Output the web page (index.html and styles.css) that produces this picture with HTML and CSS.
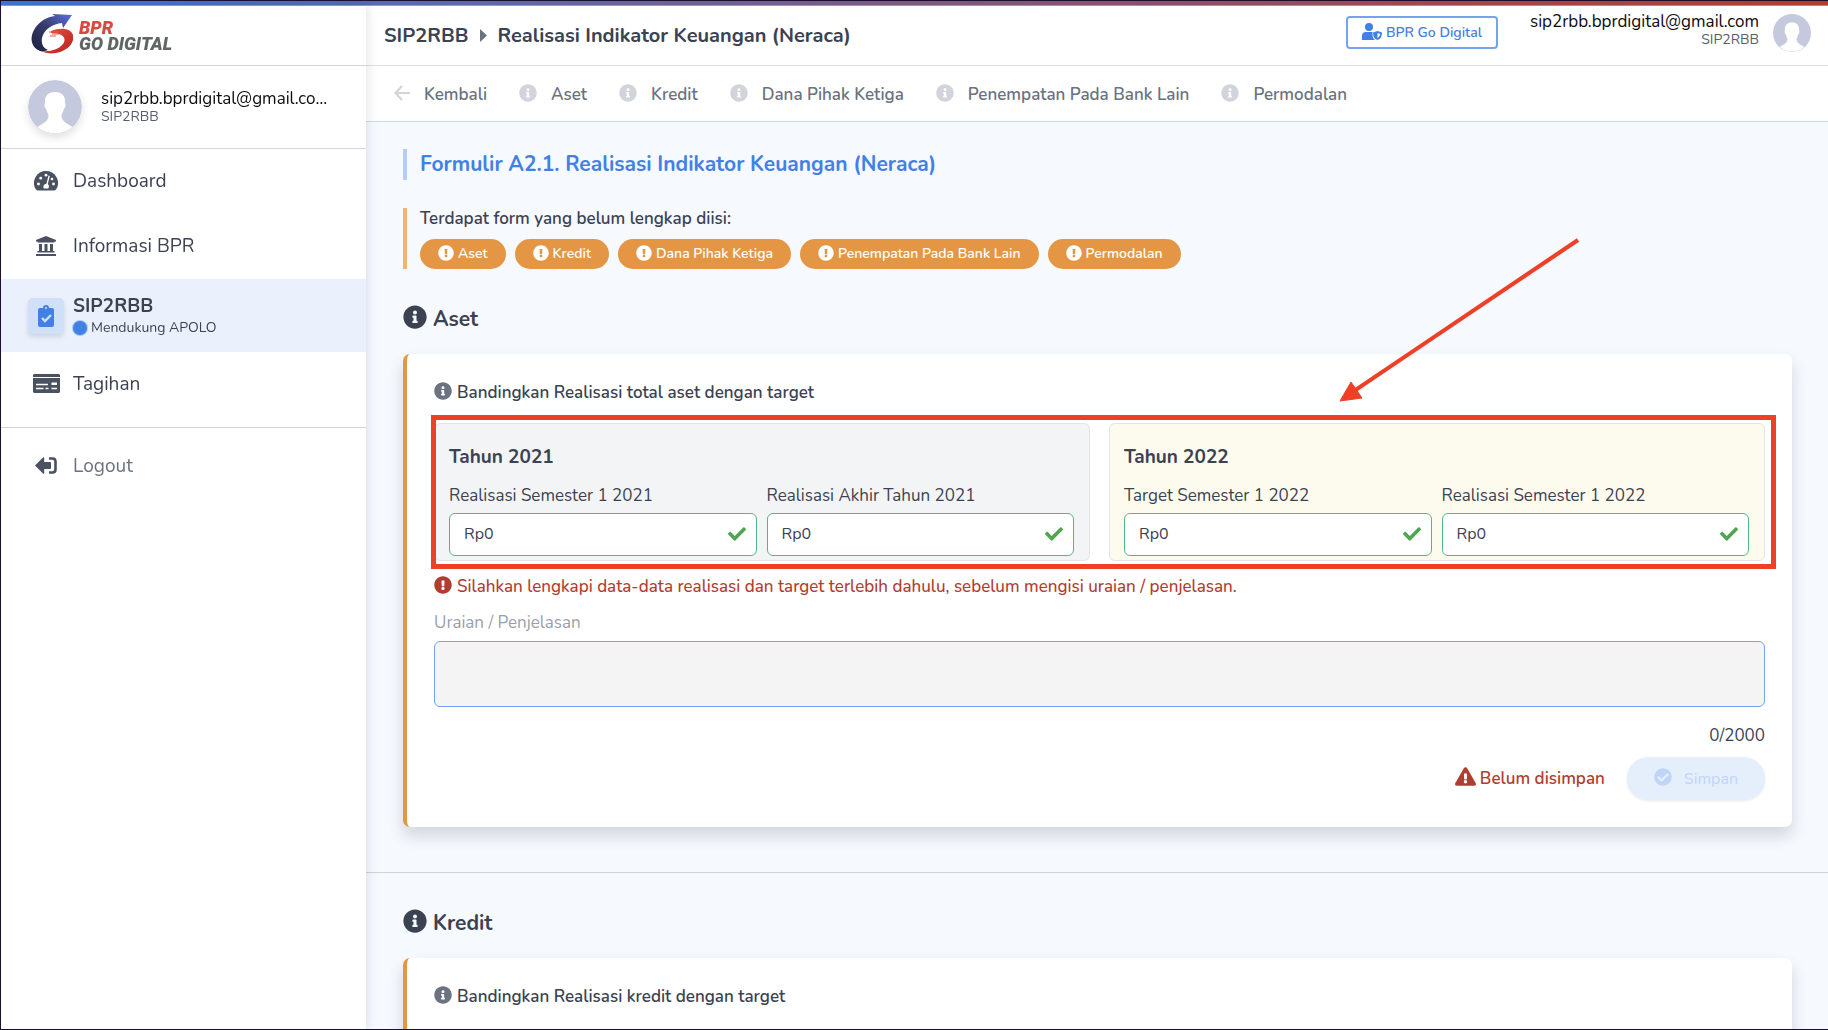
FILE: index.html
```html
<!DOCTYPE html>
<html lang="id">
<head>
<meta charset="utf-8">
<meta name="viewport" content="width=device-width, initial-scale=1">
<title>SIP2RBB - Realisasi Indikator Keuangan (Neraca)</title>
<link rel="stylesheet" href="styles.css">
</head>
<body>
<svg width="0" height="0" class="sprite" aria-hidden="true">
  <symbol id="info" viewBox="0 0 512 512"><path d="M256 8C119.043 8 8 119.083 8 256c0 136.997 111.043 248 248 248s248-111.003 248-248C504 119.083 392.957 8 256 8zm0 110c23.196 0 42 18.804 42 42s-18.804 42-42 42-42-18.804-42-42 18.804-42 42-42zm56 254c0 6.627-5.373 12-12 12h-88c-6.627 0-12-5.373-12-12v-24c0-6.627 5.373-12 12-12h12v-64h-12c-6.627 0-12-5.373-12-12v-24c0-6.627 5.373-12 12-12h64c6.627 0 12 5.373 12 12v100h12c6.627 0 12 5.373 12 12v24z"/></symbol>
  <symbol id="alert" viewBox="0 0 512 512"><path d="M504 256c0 136.997-111.043 248-248 248S8 392.997 8 256C8 119.083 119.043 8 256 8s248 111.083 248 248zm-248 50c-25.405 0-46 20.595-46 46s20.595 46 46 46 46-20.595 46-46-20.595-46-46-46zm-43.673-165.346l7.418 136c.347 6.364 5.609 11.346 11.982 11.346h48.546c6.373 0 11.635-4.982 11.982-11.346l7.418-136c.375-6.874-5.098-12.654-11.982-12.654h-63.383c-6.884 0-12.356 5.78-11.981 12.654z"/></symbol>
  <symbol id="done" viewBox="0 0 512 512"><path d="M504 256c0 136.967-111.033 248-248 248S8 392.967 8 256 119.033 8 256 8s248 111.033 248 248zM227.314 387.314l184-184c6.248-6.248 6.248-16.379 0-22.627l-22.627-22.627c-6.248-6.249-16.379-6.249-22.628 0L216 308.118l-70.059-70.059c-6.248-6.248-16.379-6.248-22.628 0l-22.627 22.627c-6.248 6.248-6.248 16.379 0 22.627l104 104c6.249 6.249 16.379 6.249 22.628.001z"/></symbol>
  <symbol id="warn" viewBox="0 0 576 512"><path d="M569.517 440.013C587.975 472.007 564.806 512 527.94 512H48.054c-36.937 0-59.999-40.055-41.577-71.987L246.423 23.985c18.467-32.009 64.72-31.951 83.154 0l239.94 416.028zM288 354c-25.405 0-46 20.595-46 46s20.595 46 46 46 46-20.595 46-46-20.595-46-46-46zm-43.673-165.346l7.418 136c.347 6.364 5.609 11.346 11.982 11.346h48.546c6.373 0 11.635-4.982 11.982-11.346l7.418-136c.375-6.874-5.098-12.654-11.982-12.654h-63.383c-6.884 0-12.356 5.78-11.981 12.654z"/></symbol>
  <symbol id="check" viewBox="0 0 512 512"><path d="M173.898 439.404l-166.4-166.4c-9.997-9.997-9.997-26.206 0-36.204l36.203-36.204c9.997-9.998 26.207-9.998 36.204 0L192 312.69 432.095 72.596c9.997-9.997 26.207-9.997 36.204 0l36.203 36.204c9.997 9.997 9.997 26.206 0 36.204l-294.4 294.401c-9.998 9.997-26.207 9.997-36.204-.001z"/></symbol>
  <symbol id="avatar" viewBox="0 0 54 54"><circle cx="27" cy="27" r="27" fill="#c5c9de"/><path d="M27 12c-7 0-10.500 4-10 11-1 1-.5 5 1.200 6 .6 3 1.800 4.500 2.300 6 .3 6-4.500 8-11 12a27 27 0 0 0 35 0c-6.500-4-11.300-6-11-12 .5-1.500 1.700-3 2.300-6 1.700-1 2.200-5 1.200-6 .5-7-3-11-10-11z" fill="#fff"/></symbol>
</svg>

<div class="topline"></div>
<div class="shell">
  <aside class="sidebar">
    <a class="brand" href="#" aria-label="BPR Go Digital">
      <svg class="brand-mark" viewBox="0 0 42 40" aria-hidden="true">
        <defs>
          <linearGradient id="navy" x1="0" y1="1" x2="1" y2="0"><stop offset="0" stop-color="#1c1f3d"/><stop offset=".5" stop-color="#363c6b"/><stop offset="1" stop-color="#5b6fe0"/></linearGradient>
          <linearGradient id="crimson" x1="0" y1="0" x2="1" y2="1"><stop offset="0" stop-color="#e8564a"/><stop offset="1" stop-color="#b5201b"/></linearGradient>
        </defs>
        <path d="M9 37C1 34-2 25 3 16 8 7 16 3 24 2l-3-2 20 1-9 13-1-5C22 10 13 15 11 24c-1 6 1 10 6 12-3 1-5 2-8 1z" fill="url(#navy)"/>
        <path d="M20 17c9-4 20-3 22 4 2 8-6 16-17 18-6 1-11 0-15-2 10 1 18-2 22-7 4-6 0-11-12-11z" fill="url(#crimson)"/>
        <path d="M18 18h9M21 20h7M19 22h6" stroke="#e8564a" stroke-width="1"/>
      </svg>
      <span class="brand-name"><span class="brand-top">BPR</span><span class="brand-bottom">GO DIGITAL</span></span>
    </a>
    <div class="profile">
      <svg class="profile-pic" aria-hidden="true"><use href="#avatar"/></svg>
      <div class="profile-text">
        <div class="mail">sip2rbb.bprdigital@gmail.com</div>
        <div class="role">SIP2RBB</div>
      </div>
    </div>
    <nav class="menu" aria-label="Menu utama">
      <a class="item" href="#">
        <span class="item-icon"><svg width="24" height="20" viewBox="0 0 24 20" aria-hidden="true"><path d="M12 0A12 12 0 0 0 1.600 18q.8 1.400 2 1.400h16.800q1.200 0 2-1.400A12 12 0 0 0 12 0z"/><g fill="#fff"><circle cx="4.500" cy="13" r="1.400"/><circle cx="6.700" cy="7.200" r="1.400"/><circle cx="12" cy="4.200" r="1.400"/><circle cx="18" cy="8" r="1.300"/><circle cx="19.500" cy="13" r="1.400"/><path d="M14.500 4.500l1.300.4-2 8.200a3 3 0 0 1 .3 4.500h-4.200a3 3 0 0 1 2.500-4.800z"/></g></svg></span>
        <span>Dashboard</span>
      </a>
      <a class="item" href="#">
        <span class="item-icon"><svg width="20" height="20" viewBox="0 0 20 20" aria-hidden="true"><path d="M10 0l10 4v1.500h-1.500v1h-17v-1H0V4zM3 8h3v7h2.500V8h3v7H14V8h3v7h1.500v1.500h-17V15H3zM0 18h20v2H0z"/></svg></span>
        <span>Informasi BPR</span>
      </a>
      <a class="item item-active" href="#" aria-current="page">
        <span class="item-icon tile"><svg width="16" height="22" viewBox="0 0 16 22" aria-hidden="true"><path d="M2 3h3a3 3 0 0 1 6 0h3a2 2 0 0 1 2 2v15a2 2 0 0 1-2 2H2a2 2 0 0 1-2-2V5a2 2 0 0 1 2-2z"/><circle cx="8" cy="3" r="1" fill="#cfe0f8"/><path d="M4 13l3 3 6-6" fill="none" stroke="#cfe0f8" stroke-width="2.400"/></svg></span>
        <span class="item-stack"><span>SIP2RBB</span><small><i class="dot"></i>Mendukung APOLO</small></span>
      </a>
      <a class="item" href="#">
        <span class="item-icon"><svg width="27" height="19" viewBox="0 0 27 19" aria-hidden="true"><path d="M1 0h25l1 1v2H0V1zM0 4h27v14l-1 1H1l-1-1z"/><path d="M3 10.500h12M3 14.500h7.500M12.500 14.500h3M18.500 14.500H24" stroke="#fff" stroke-width="1.300"/><path d="M18.500 8.500H24V11h-5.500z" fill="#fff"/></svg></span>
        <span>Tagihan</span>
      </a>
    </nav>
    <div class="menu menu-end">
      <a class="item item-muted" href="#">
        <span class="item-icon"><svg width="22" height="17" viewBox="0 0 22 17" aria-hidden="true"><path d="M0 8.500L8 .5q1-.8 1.200.6V5H15q1 0 1 1v5q0 1-1 1H9.200v3.900q-.2 1.400-1.200.6z"/><path d="M14 1.500h3.500q3 0 3 3v8q0 3-3 3H14" fill="none" stroke="#4a5160" stroke-width="2.600"/></svg></span>
        <span>Logout</span>
      </a>
    </div>
  </aside>

  <div class="content">
    <header class="header">
      <h1 class="crumbs"><span>SIP2RBB</span><svg width="7" height="13" viewBox="0 0 7 13" aria-hidden="true"><path d="M0 0l7 6.500L0 13z"/></svg><span>Realisasi Indikator Keuangan (Neraca)</span></h1>
      <div class="account">
        <button class="org" type="button"><svg width="20" height="17" viewBox="0 0 20 17" aria-hidden="true"><circle cx="7" cy="4" r="4"/><path d="M0 17v-4q0-4 4-4h6.500v3q0 3.500 2.500 5zM15.500 8l4.500 1.500c0 4-1.500 6.500-4.500 7.500-3-1-4.500-3.500-4.500-7.500z"/><path d="M15.500 10v5c1.500-.8 2.500-2.200 2.700-4z" fill="#fff"/></svg>BPR Go Digital</button>
        <div class="account-text"><div class="mail">sip2rbb.bprdigital@gmail.com</div><div class="role">SIP2RBB</div></div>
        <svg class="account-pic" aria-hidden="true"><use href="#avatar"/></svg>
      </div>
    </header>
    <nav class="tabs" aria-label="Bagian formulir">
      <a href="#"><svg width="16" height="16" viewBox="0 0 16 16" aria-hidden="true"><path d="M8 1L1.500 8 8 15M1.500 8H16" fill="none" stroke="#d1d5db" stroke-width="2.200"/></svg>Kembali</a>
      <a href="#aset"><svg class="i18" aria-hidden="true"><use href="#info"/></svg>Aset</a>
      <a href="#kredit"><svg class="i18" aria-hidden="true"><use href="#info"/></svg>Kredit</a>
      <a href="#"><svg class="i18" aria-hidden="true"><use href="#info"/></svg>Dana Pihak Ketiga</a>
      <a href="#"><svg class="i18" aria-hidden="true"><use href="#info"/></svg>Penempatan Pada Bank Lain</a>
      <a href="#"><svg class="i18" aria-hidden="true"><use href="#info"/></svg>Permodalan</a>
    </nav>
    <main class="main">
      <div class="intro">
        <h2 class="form-title">Formulir A2.1. Realisasi Indikator Keuangan (Neraca)</h2>
        <div class="notice">
          <p>Terdapat form yang belum lengkap diisi:</p>
          <div class="pills">
            <a href="#aset"><svg class="i16" aria-hidden="true"><use href="#alert"/></svg>Aset</a>
            <a href="#kredit"><svg class="i16" aria-hidden="true"><use href="#alert"/></svg>Kredit</a>
            <a href="#"><svg class="i16" aria-hidden="true"><use href="#alert"/></svg>Dana Pihak Ketiga</a>
            <a href="#"><svg class="i16" aria-hidden="true"><use href="#alert"/></svg>Penempatan Pada Bank Lain</a>
            <a href="#"><svg class="i16" aria-hidden="true"><use href="#alert"/></svg>Permodalan</a>
          </div>
        </div>
      </div>

      <section class="section" id="aset">
        <h3 class="section-title"><svg class="i24" aria-hidden="true"><use href="#info"/></svg>Aset</h3>
        <form class="card">
          <p class="lead"><svg class="i18" aria-hidden="true"><use href="#info"/></svg>Bandingkan Realisasi total aset dengan target</p>
          <div class="years">
            <fieldset class="year">
              <legend>Tahun 2021</legend>
              <div class="fields">
                <label>Realisasi Semester 1 2021<span class="money"><input type="text" value="Rp0"><svg class="i18" aria-hidden="true"><use href="#check"/></svg></span></label>
                <label>Realisasi Akhir Tahun 2021<span class="money"><input type="text" value="Rp0"><svg class="i18" aria-hidden="true"><use href="#check"/></svg></span></label>
              </div>
            </fieldset>
            <fieldset class="year year-target">
              <legend>Tahun 2022</legend>
              <div class="fields">
                <label>Target Semester 1 2022<span class="money"><input type="text" value="Rp0"><svg class="i18" aria-hidden="true"><use href="#check"/></svg></span></label>
                <label>Realisasi Semester 1 2022<span class="money"><input type="text" value="Rp0"><svg class="i18" aria-hidden="true"><use href="#check"/></svg></span></label>
              </div>
            </fieldset>
            <div class="marker"></div>
            <svg class="pointer" viewBox="0 0 240 164" aria-hidden="true"><path d="M238 2L14 153" stroke="#ed4026" stroke-width="4"/><path d="M0 163l11-19 11 16z" fill="#ed4026" stroke="#ed4026"/></svg>
          </div>
          <p class="error"><svg class="i18" aria-hidden="true"><use href="#alert"/></svg>Silahkan lengkapi data-data realisasi dan target terlebih dahulu, sebelum mengisi uraian / penjelasan.</p>
          <label class="note-label" for="uraian-aset">Uraian / Penjelasan</label>
          <textarea class="note" id="uraian-aset" disabled></textarea>
          <div class="count">0/2000</div>
          <div class="actions">
            <span class="unsaved"><svg width="21" height="19" aria-hidden="true"><use href="#warn"/></svg>Belum disimpan</span>
            <button class="save" type="submit" disabled><svg class="i18" aria-hidden="true"><use href="#done"/></svg>Simpan</button>
          </div>
        </form>
      </section>

      <section class="section" id="kredit">
        <h3 class="section-title"><svg class="i24" aria-hidden="true"><use href="#info"/></svg>Kredit</h3>
        <form class="card">
          <p class="lead"><svg class="i18" aria-hidden="true"><use href="#info"/></svg>Bandingkan Realisasi kredit dengan target</p>
        </form>
      </section>
    </main>
  </div>
</div>
</body>
</html>
```
FILE: styles.css
```css
*, *::before, *::after { box-sizing: border-box; }

body {
  margin: 0;
  height: 100vh;
  display: flex;
  flex-direction: column;
  border: 1px solid #1b1030;
  border-right: 0;
  overflow: hidden;
  background: #fff;
  color: #3b4252;
  font: 17px/20px Nunito, "Noto Sans", sans-serif;
}

h1, h2, h3, p { margin: 0; }
a { color: inherit; text-decoration: none; }
svg { flex: none; fill: currentColor; }
button, input, textarea { font: inherit; font-size: 16px; color: inherit; }

.sprite { position: absolute; }
.i16 { width: 16px; height: 16px; }
.i18 { width: 18px; height: 18px; }
.i24 { width: 24px; height: 24px; }

.topline {
  flex: none;
  height: 5px;
  background: linear-gradient(90deg, #3f78d4, #b83a2e);
  border-bottom: 1px solid rgba(255, 255, 255, .35);
}

.shell { flex: 1; display: flex; min-height: 0; }

/* Sidebar */
.sidebar {
  position: relative;
  z-index: 1;
  flex: none;
  width: 365px;
  background: #fff;
  box-shadow: 0 0 12px rgba(0, 20, 40, .14);
}
.brand {
  display: flex;
  align-items: center;
  gap: 6px;
  height: 60px;
  padding-left: 30px;
  border-bottom: 1px solid #d3d5dd;
}
.brand-mark { width: 42px; height: 40px; margin-bottom: 4px; }
.brand-name {
  display: flex;
  flex-direction: column;
  font-family: Roboto, "Liberation Sans", sans-serif;
  font-style: italic;
  font-weight: 900;
  font-size: 18px;
  line-height: 16px;
}
.brand-top { color: #dc4740; }
.brand-bottom { color: #5f6664; }

.profile {
  display: flex;
  align-items: center;
  gap: 19px;
  height: 83px;
  padding: 0 38px 0 27px;
  border-bottom: 1px solid #d3d5dd;
}
.profile-pic {
  width: 54px;
  height: 54px;
  border-radius: 50%;
  box-shadow: 0 4px 8px rgba(0, 0, 0, .12);
}
.profile-text { min-width: 0; }
.mail { white-space: nowrap; color: #0c0c10; }
.profile .mail { overflow: hidden; text-overflow: ellipsis; }
.role { font-size: 14px; line-height: 16px; color: #565d6e; }

.item {
  display: flex;
  align-items: center;
  gap: 9px;
  height: 65px;
  padding: 0 0 2px 27px;
  font-size: 19px;
}
.item-icon {
  display: flex;
  align-items: center;
  justify-content: center;
  width: 36px;
  height: 36px;
  color: #4a5160;
}
.item-active { height: 73px; padding-bottom: 0; background: #eaf1fc; font-weight: 700; }
.tile {
  border-radius: 5px;
  background: #cfe0f8;
  color: #4280e6;
  box-shadow: 0 3px 5px rgba(0, 0, 0, .12);
}
.item-stack { display: flex; flex-direction: column; gap: 2px; padding-top: 3px; }
.item-stack small {
  display: flex;
  align-items: center;
  gap: 4px;
  font-size: 14px;
  font-weight: 400;
}
.dot {
  width: 14px;
  height: 14px;
  background: #4280e6;
  border-radius: 50%;
  box-shadow: 0 0 0 1px #a9c6f4;
}
.item-muted { color: #6b7280; }
.menu-end { margin-top: 10px; padding-top: 6px; border-top: 1px solid #cfd2d8; }

/* Header */
.content { flex: 1; min-width: 0; display: flex; flex-direction: column; }
.header {
  flex: none;
  display: flex;
  justify-content: space-between;
  align-items: center;
  height: 60px;
  padding: 0 17px 0 18px;
  border-bottom: 1px solid #dcdfe3;
}
.crumbs {
  display: flex;
  align-items: center;
  gap: 11px;
  font-size: 20px;
  font-weight: 700;
}
.crumbs svg { color: #6b7280; }
.account { display: flex; align-items: center; padding-bottom: 6px; }
.org {
  display: flex;
  align-items: center;
  gap: 4px;
  height: 33px;
  padding: 0 14px;
  border: 2px solid #75a3ef;
  border-radius: 4px;
  background: #fff;
  color: #4280e6;
  font-size: 14px;
  font-weight: 600;
}
.account-text { padding: 0 14px 6px 32px; text-align: right; }
.account-pic { width: 38px; height: 38px; }

.tabs {
  flex: none;
  display: flex;
  align-items: center;
  gap: 32px;
  height: 56px;
  padding: 2px 0 0 28px;
  border-bottom: 1px solid #c9dcef;
  color: #6b7280;
  font-weight: 600;
}
.tabs a { display: flex; align-items: center; gap: 14px; }
.tabs svg { color: #d1d5db; }

/* Icons beside a line of text sit slightly above its middle */
.tabs svg, .lead svg, .error svg, .section-title svg, .unsaved svg, .save svg { margin-bottom: 4px; }
.pills svg, .org svg { margin-bottom: 2px; }

/* Form area */
.main {
  flex: 1;
  overflow-y: auto;
  scrollbar-width: none;
  background: #f6f9fe;
}
.intro { padding: 27px 36px 0 37px; }
.form-title {
  padding-left: 13px;
  border-left: 4px solid #b3cdf3;
  color: #4280e6;
  font-size: 21px;
  line-height: 31px;
  font-weight: 700;
}
.notice {
  margin-top: 28px;
  padding-left: 13px;
  border-left: 4px solid #eeb473;
  font-weight: 600;
}
.notice p { line-height: 22px; }
.pills { display: flex; gap: 9px; padding-top: 9px; font-size: 14px; font-weight: 600; }
.pills a {
  display: flex;
  align-items: center;
  gap: 4px;
  height: 30px;
  padding: 0 18px;
  border-radius: 15px;
  background: #e59645;
  color: #fff;
}

.section { padding: 36px 36px 45px 37px; }
.section + .section { border-top: 1px solid #cfd3da; }
.section-title {
  display: flex;
  align-items: center;
  gap: 6px;
  font-size: 21px;
  line-height: 28px;
  font-weight: 700;
}
.card {
  display: flex;
  flex-direction: column;
  margin-top: 21px;
  min-height: 473px;
  padding: 27px 27px;
  border-left: 4px solid #e59645;
  border-radius: 7px;
  background: #fff;
  box-shadow: 0 9px 16px rgba(20, 40, 50, .16);
}
.lead { display: flex; align-items: center; gap: 5px; line-height: 24px; font-weight: 600; }
.lead svg { color: #6b7280; }

.years {
  position: relative;
  display: grid;
  grid-template-columns: 1fr 1fr;
  gap: 19px;
  margin-top: 18px;
}
.year {
  min-width: 0;
  margin: 0;
  padding: 21px 15px 4px 14px;
  border: 1px solid #e4e5ea;
  border-radius: 6px;
  background: #f3f4f6;
}
.year-target { background: #fdfbee; }
.year legend {
  float: left;
  width: 100%;
  padding: 0;
  font-size: 19px;
  line-height: 24px;
  font-weight: 700;
}
.fields { clear: both; display: grid; grid-template-columns: 1fr 1fr; gap: 10px; padding-top: 17px; }
.money { position: relative; display: block; margin-top: 7px; }
.money input {
  display: block;
  width: 100%;
  height: 43px;
  padding: 0 40px 2px 14px;
  border: 1px solid #52b788;
  border-radius: 6px;
  background: #fff;
}
.money svg { position: absolute; right: 11px; top: 12px; color: #4fa64f; }

.marker {
  position: absolute;
  inset: -8px -11px -8px -3px;
  border: 5px solid #ed4026;
  pointer-events: none;
}
.pointer {
  position: absolute;
  width: 240px;
  height: 164px;
  right: 185px;
  bottom: 159px;
  pointer-events: none;
}

.error { display: flex; align-items: center; gap: 5px; margin-top: 14px; line-height: 24px; color: #b13d30; font-weight: 500; }
.note-label { margin-top: 14px; color: #9a9fab; }
.note {
  width: 100%;
  height: 66px;
  margin-top: 8px;
  border: 1px solid #75a3ef;
  border-radius: 6px;
  background: #f4f4f4;
  resize: none;
}
.count { margin-top: 19px; text-align: right; }
.actions { display: flex; justify-content: flex-end; align-items: center; gap: 22px; margin-top: 11px; }
.unsaved { display: flex; align-items: center; gap: 4px; color: #b13d30; font-weight: 600; }
.save {
  display: flex;
  align-items: center;
  gap: 12px;
  height: 43px;
  padding: 0 27px;
  border: 0;
  border-radius: 22px;
  background: #e5effc;
  color: #bfd5f8;
  box-shadow: 0 1px 3px rgba(0, 0, 0, .1);
}
```
